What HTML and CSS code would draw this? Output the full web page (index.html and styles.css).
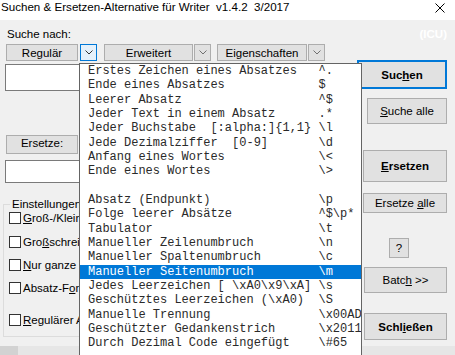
FILE: index.html
```html
<!DOCTYPE html>
<html lang="de">
<head>
<meta charset="utf-8">
<title>Suchen &amp; Ersetzen-Alternative für Writer</title>
<link rel="stylesheet" href="styles.css">
</head>
<body>
<div class="window">
  <header class="titlebar">
    <span class="title">Suchen &amp; Ersetzen-Alternative für Writer  v1.4.2  3/2017</span>
    <svg class="close" width="10" height="10" viewBox="0 0 10 10"><path d="M0.5 0.5 L9.5 9.5 M9.5 0.5 L0.5 9.5" stroke="#000" stroke-width="1" fill="none"/></svg>
  </header>

  <div class="dialog">
    <div class="left">
      <div class="label">Suche nach:</div>
      <div class="combos">
        <div class="btn c-reg">Regulär</div>
        <div class="btn arrow focus"><svg width="8" height="5" viewBox="0 0 8 5"><polyline points="0.5,0.5 4,4 7.5,0.5" fill="none" stroke="#333" stroke-width="1"/></svg></div>
        <div class="btn c-erw">Erweitert</div>
        <div class="btn arrow"><svg width="8" height="5" viewBox="0 0 8 5"><polyline points="0.5,0.5 4,4 7.5,0.5" fill="none" stroke="#707070" stroke-width="1"/></svg></div>
        <div class="btn c-eig">Eigenschaften</div>
        <div class="btn arrow"><svg width="8" height="5" viewBox="0 0 8 5"><polyline points="0.5,0.5 4,4 7.5,0.5" fill="none" stroke="#707070" stroke-width="1"/></svg></div>
      </div>
      <div class="input search"></div>
      <div class="btn ersetze-lbl">Ersetze:</div>
      <div class="input replace"></div>
      <fieldset class="group">
        <legend>Einstellungen</legend>
        <div class="check c1"><span class="box"></span><span><u>G</u>roß-/Kleinschreibung beachten</span></div>
        <div class="check c2"><span class="box"></span><span>Gro<u>ß</u>schreibung beibehalten</span></div>
        <div class="check c3"><span class="box"></span><span><u>N</u>ur ganze Wörter</span></div>
        <div class="check c4"><span class="box"></span><span>Absatz-F<u>o</u>rmatvorlagen</span></div>
        <div class="check c5"><span class="box"></span><span><u>R</u>egulärer Ausdruck</span></div>
      </fieldset>
    </div>

    <div class="right">
      <div class="icu">(ICU)</div>
      <div class="btn default b-suchen"><b>Suc<u>h</u>en</b></div>
      <div class="btn b-suchealle"><span><u>S</u>uche alle</span></div>
      <div class="btn b-ersetzen"><b><u>E</u>rsetzen</b></div>
      <div class="btn b-ersetzealle"><span>Ersetze <u>a</u>lle</span></div>
      <div class="btn b-help">?</div>
      <div class="btn b-batch"><span>Batc<u>h</u> &gt;&gt;</span></div>
      <div class="btn b-close"><b>Schl<u>i</u>eßen</b></div>
    </div>

    <ul class="dropdown">
      <li><span>Erstes Zeichen eines Absatzes</span><span>^.</span></li>
      <li><span>Ende eines Absatzes</span><span>$</span></li>
      <li><span>Leerer Absatz</span><span>^$</span></li>
      <li><span>Jeder Text in einem Absatz</span><span>.*</span></li>
      <li><span>Jeder Buchstabe  [:alpha:]{1,1}</span><span>\l</span></li>
      <li><span>Jede Dezimalziffer  [0-9]</span><span>\d</span></li>
      <li><span>Anfang eines Wortes</span><span>\&lt;</span></li>
      <li><span>Ende eines Wortes</span><span>\&gt;</span></li>
      <li><span> </span><span> </span></li>
      <li><span>Absatz (Endpunkt)</span><span>\p</span></li>
      <li><span>Folge leerer Absätze</span><span>^$\p*</span></li>
      <li><span>Tabulator</span><span>\t</span></li>
      <li><span>Manueller Zeilenumbruch</span><span>\n</span></li>
      <li><span>Manueller Spaltenumbruch</span><span>\c</span></li>
      <li class="sel"><span>Manueller Seitenumbruch</span><span>\m</span></li>
      <li><span>Jedes Leerzeichen [ \xA0\x9\xA]</span><span>\s</span></li>
      <li><span>Geschütztes Leerzeichen (\xA0)</span><span>\S</span></li>
      <li><span>Manuelle Trennung</span><span>\x00AD</span></li>
      <li><span>Geschützter Gedankenstrich</span><span>\x2011</span></li>
      <li><span>Durch Dezimal Code eingefügt</span><span>\#65</span></li>
    </ul>
  </div>

  <div class="statusbar"><span class="seg"></span></div>
</div>
</body>
</html>
```

FILE: styles.css
```css
* { box-sizing: border-box; }
html, body { margin: 0; padding: 0; }
body {
  width: 455px;
  height: 355px;
  overflow: hidden;
  background: #f0f0f0;
  font-family: "Liberation Sans", Arial, sans-serif;
  font-size: 11.5px;
  color: #000;
}
u { text-decoration: underline; text-underline-offset: 1px; }

.window { display: flex; flex-direction: column; height: 355px; overflow: hidden; }

.titlebar {
  height: 20px;
  flex: none;
  background: #fff;
  display: flex;
  justify-content: space-between;
  align-items: flex-start;
}
.title { font-size: 11.6px; line-height: 14px; padding-left: 1px; white-space: pre; }
.close { margin: 3px 10px 0 0; }

.dialog {
  position: relative;
  flex: 1;
  display: flex;
  gap: 5px;
  padding: 6px 8px 0 0;
}

.left { flex: 1; display: flex; flex-direction: column; align-items: flex-start; min-width: 0; }
.label { line-height: 16px; margin-left: 7px; }

.btn {
  display: flex;
  align-items: center;
  justify-content: center;
  background: #e1e1e1;
  border: 1px solid #adadad;
  white-space: nowrap;
}
.combos { display: flex; margin: 2px 0 0 6px; height: 17px; }
.combos .btn { height: 17px; }
.c-reg { width: 72px; margin-right: 2px; }
.c-erw { width: 89px; margin-left: 7px; margin-right: 1px; }
.c-eig { width: 90px; margin-left: 6px; margin-right: 1px; }
.arrow { width: 17px; }
.arrow.focus { border-color: #0078d7; background: #e5f1fb; }

.input { background: #fff; border: 1px solid #7a7a7a; }
.search { margin: 3px 0 0 5px; height: 27px; width: calc(100% - 5px); }
.ersetze-lbl { margin: 44px 0 0 6px; width: 72px; height: 19px; align-items: flex-start; line-height: 13px; padding-top: 1px; }
.replace { margin: 6px 0 0 5px; height: 23px; width: calc(100% - 5px); }

.group {
  margin: 13px 0 0 3px;
  width: calc(100% - 3px);
  border: 1px solid #dcdcdc;
  padding: 0 0 10px 0;
  min-width: 0;
}
.group legend { margin-left: 6px; padding: 0 2px; line-height: 16px; font-size: 11.5px; }
.check { display: flex; align-items: center; height: 12px; margin-left: 5px; gap: 2px; line-height: 12px; white-space: nowrap; }
.check .box { width: 12px; height: 12px; border: 1px solid #333; background: #fff; flex: none; }
.c2 { margin-top: 12px; }
.c3 { margin-top: 11px; }
.c4 { margin-top: 11px; }
.c5 { margin-top: 20px; }

.right { width: 90px; flex: none; display: flex; flex-direction: column; align-items: flex-end; }
.icu { line-height: 16px; font-weight: bold; color: #fff; }
.default { border: 2px solid #0078d7; }
.b-suchen { margin-top: 18px; width: 90px; height: 29px; }
.b-suchealle { margin-top: 9px; width: 80px; height: 26px; }
.b-ersetzen { margin-top: 26px; width: 84px; height: 32px; }
.b-ersetzealle { margin-top: 11px; width: 84px; height: 20px; }
.b-help { margin-top: 25px; margin-right: 38px; width: 20px; height: 20px; }
.b-batch { margin-top: 9px; width: 83px; height: 26px; }
.b-close { margin-top: 20px; width: 83px; height: 27px; }

.dropdown {
  position: absolute;
  z-index: 5;
  left: 79px;
  top: 43px;
  width: 283px;
  height: 292px;
  margin: 0;
  padding: 0;
  list-style: none;
  background: #fff;
  border: 1px solid #646464;
  border-bottom: 0;
  overflow: hidden;
  font-family: "Liberation Mono", "Courier New", monospace;
  font-size: 12px;
  color: #2a2a2a;
}
.dropdown li {
  display: grid;
  grid-template-columns: 32ch 1fr;
  height: 14.33px;
  line-height: 14.33px;
  padding-left: 8px;
  white-space: pre;
}
.dropdown li.sel { background: #0078d7; color: #fff; }

.statusbar { height: 9px; flex: none; background: #e6e6e6; display: flex; }
.statusbar .seg { width: 18px; background: #d2d2d2; }
```
